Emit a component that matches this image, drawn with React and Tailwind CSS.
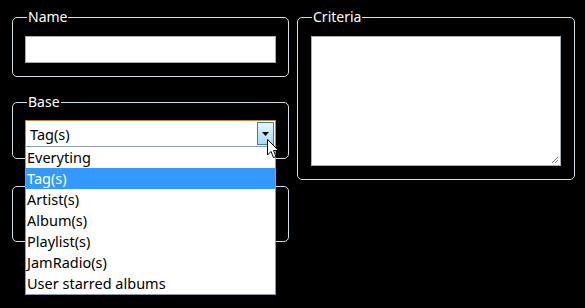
import React from "react";

const font = { fontFamily: '"Noto Sans", "Open Sans", sans-serif' };

function Group({ label, className = "", children }) {
  return (
    <div className={"relative rounded-[5px] border border-[#d5dfe5] " + className}>
      {label && (
        <span className="absolute left-[14px] top-[-10px] bg-black px-px text-[14px] leading-[18px] text-white">
          {label}
        </span>
      )}
      {children}
    </div>
  );
}

function Cursor() {
  return (
    <svg className="absolute left-[267px] top-[139px]" width="14" height="21" viewBox="0 0 14 21">
      <path d="M0.5 0.5 L0.5 16 L4 12.5 L6.5 18.5 L9 17.5 L6.5 11.5 L11.5 11.5 Z" fill="#fff" stroke="#000" strokeWidth="1" strokeLinejoin="miter" />
    </svg>
  );
}

export default function App() {
  const items = ["Everyting", "Tag(s)", "Artist(s)", "Album(s)", "Playlist(s)", "JamRadio(s)", "User starred albums"];
  return (
    <div className="relative h-[308px] w-[585px] overflow-hidden bg-black" style={font}>
      <div className="flex gap-[8px] pl-[12px] pt-[17px]">
        <div className="flex w-[277px] flex-col">
          <Group label="Name" className="h-[60px] px-[12px] pt-[18px]">
            <div className="h-[27px] w-full border border-[#abadb3] bg-white" />
          </Group>
          <Group label="Base" className="mt-[25px] h-[57px] px-[12px] pt-[17px]">
            <div className="flex h-[27px] w-full items-center border border-[#c28a30] bg-white pl-[4px] pr-px">
              <span className="flex-1 text-[14.5px] leading-[18px] text-black">Tag(s)</span>
              <div className="flex h-[23px] w-[17px] items-center justify-center border border-[#3c7fb1] bg-gradient-to-b from-[#eaf6fd] to-[#a7d9f5]">
                <svg width="7" height="4" viewBox="0 0 7 4">
                  <path d="M0 0 H7 L3.5 4 Z" fill="#000" />
                </svg>
              </div>
            </div>
          </Group>
          <Group className="mt-[27px] h-[56px]" />
        </div>
        <Group label="Criteria" className="h-[163px] w-[278px] px-[13px] pt-[18px]">
          <div className="relative h-[130px] w-full border border-[#abadb3] bg-white">
            <svg className="absolute bottom-[1px] right-[1px]" width="9" height="9" viewBox="0 0 9 9">
              <path d="M8 2 L2 8 M8 5 L5 8" stroke="#777" strokeWidth="1" />
            </svg>
          </div>
        </Group>
      </div>

      <div className="absolute left-[25px] top-[146px] w-[251px] border border-[#8a9bb5] bg-white">
        {items.map((it, i) => (
          <div
            key={it}
            className={
              "h-[21px] pl-px text-[14.5px] leading-[21px] " +
              (i === 1 ? "bg-[#3399ff] text-white" : "text-black")
            }
          >
            {it}
          </div>
        ))}
      </div>
      <Cursor />
    </div>
  );
}
